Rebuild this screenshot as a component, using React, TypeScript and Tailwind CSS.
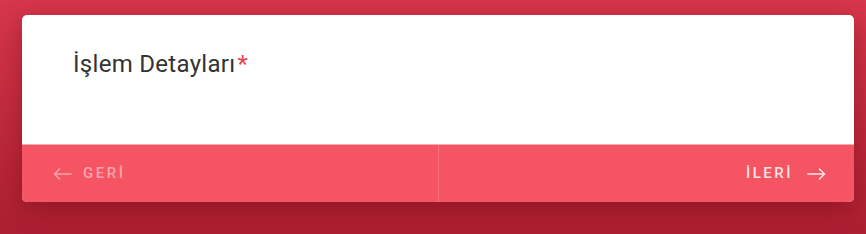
import React from 'react';

const ArrowLeft = () => (
    <svg width="19" height="12" viewBox="0 0 19 12" fill="none" stroke="currentColor" strokeWidth="1.6" strokeLinecap="round" strokeLinejoin="round">
        <path d="M18 6H1.5M6.5 1L1.5 6l5 5" />
    </svg>
);

const ArrowRight = () => (
    <svg width="19" height="12" viewBox="0 0 19 12" fill="none" stroke="currentColor" strokeWidth="1.6" strokeLinecap="round" strokeLinejoin="round">
        <path d="M1 6h16.5M12.5 1l5 5-5 5" />
    </svg>
);

const App: React.FC = () => {
    return (
        <div
            className="flex h-[234px] w-[866px] items-start bg-gradient-to-b from-[#d7364b] to-[#ac1e31] pt-[15px] pl-[22px]"
            style={{ fontFamily: 'Roboto, "Noto Sans", sans-serif' }}
        >
            <div className="flex w-[832px] flex-col overflow-hidden rounded-[5px] bg-white shadow-[0_6px_24px_rgba(80,0,10,0.35)]">
                {/* Body */}
                <div className="h-[129px] pl-[51px] pt-[34px]">
                    <h2 className="text-[24px] leading-[30px] font-normal tracking-[0.3px] text-[#333]">
                        İşlem Detayları<span className="ml-[2px] text-[#e8414f]">*</span>
                    </h2>
                </div>

                {/* Footer */}
                <div className="grid h-[58px] grid-cols-2 border-t border-[#f8a9b1] bg-[#f55463]">
                    <button className="flex items-center gap-[11px] pl-[31px] text-[15px] font-medium tracking-[2.5px] text-[#fba3ad]">
                        <ArrowLeft />
                        <span>GERİ</span>
                    </button>
                    <button className="flex items-center justify-end gap-[14px] border-l border-[#f8737f] pr-[28px] text-[15px] font-medium tracking-[2.5px] text-[#fde3e6]">
                        <span>İLERİ</span>
                        <ArrowRight />
                    </button>
                </div>
            </div>
        </div>
    );
};

export default App;
